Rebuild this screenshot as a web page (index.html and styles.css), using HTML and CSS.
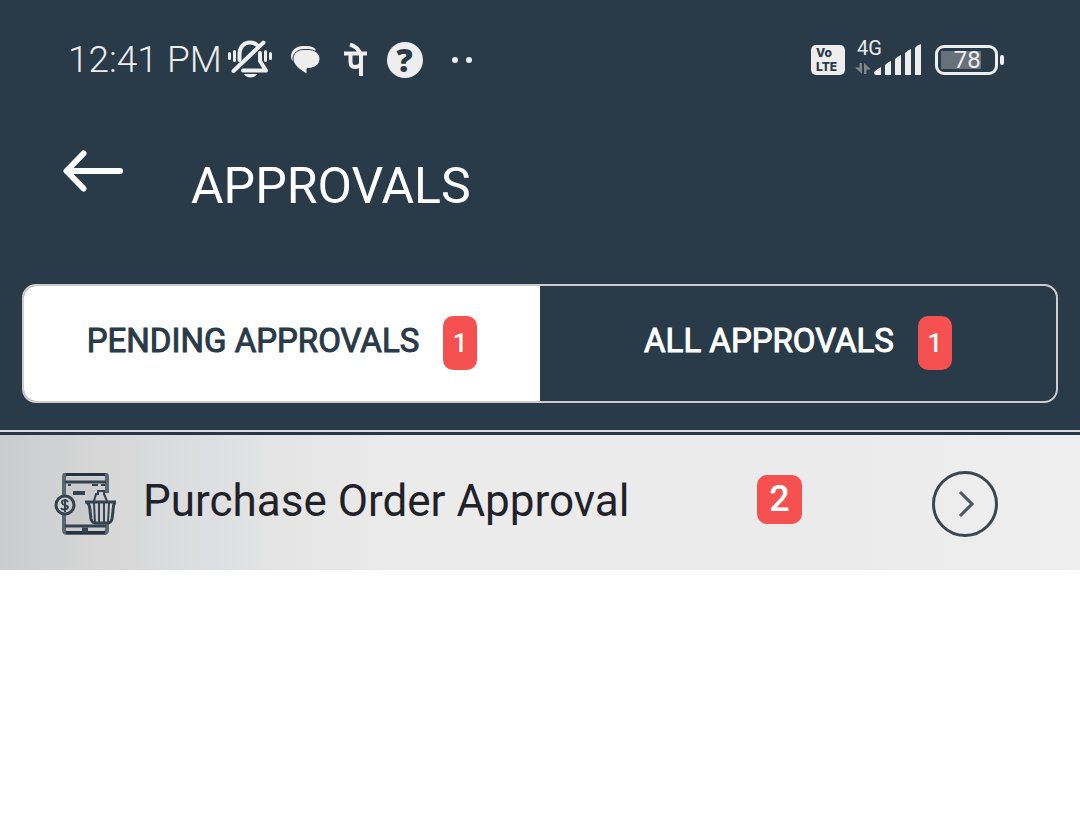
FILE: index.html
```html
<!DOCTYPE html>
<html lang="en">
<head>
<meta charset="utf-8">
<meta name="viewport" content="width=device-width, initial-scale=1">
<title>Approvals</title>
<link rel="stylesheet" href="styles.css">
</head>
<body>
<header class="top">
  <div class="status">
    <span class="clock">12:41 PM</span>
    <div class="notices">
      <svg class="bell" width="44" height="40" viewBox="0 0 44 40" fill="none" stroke="#eee" stroke-linecap="round">
        <path d="M1.500 13.500v5M6.500 11.500v9M37.500 11.500v9M42.500 13.500v5" stroke-width="3"/>
        <path d="M11.500 20v-6C11.500 7 16 2.500 22 2.500c3 0 5 .8 7 2.500M32 13v8l6 9.500H15" stroke-width="4" stroke-linejoin="round"/>
        <path d="M5.500 31L35.500 2.500" stroke-width="4"/>
        <path d="M16 34h13c-2 4.500-11 4.500-13 0z" fill="#eee" stroke="none"/>
      </svg>
      <svg class="chat" width="29" height="28" viewBox="0 0 29 28">
        <path d="M0 11C0 4 5 0 12 0h4c4 0 7 1 9 4L14 12 3 16Q0 14 0 11z" fill="#eee"/>
        <path d="M13 3.500h4c7 0 12 4 12 9.500s-5 9-11 9.500h-2V28C10 25 2 19 2 13 2 7 7 3.500 13 3.500z" fill="#eee" stroke="#293a48" stroke-width="1"/>
      </svg>
      <svg class="pay" width="24" height="34" viewBox="0 0 24 34" fill="none" stroke="#eee" stroke-width="4">
        <path d="M6 1.500q7 2 10.500 9M0 10.500h23M17 10v23M6.500 11v8q0 5 4.500 5 4 0 6-3"/>
      </svg>
      <span class="help">?</span>
      <span class="dots"><i></i><i></i></span>
    </div>
    <div class="system">
      <span class="volte"><span>Vo</span><span>LTE</span></span>
      <span class="signal">
        <span class="network">4G</span>
        <svg width="66" height="32" viewBox="0 0 66 32" fill="#eee">
          <path d="M4.500 19h2.500v11L0 23.500h4.500zM9 19l7 6.500h-4.500V30H9z" fill="#7d858c"/>
          <path d="M19 28q3-3 7-5v8h-5q-2 0-2-3z"/>
          <path d="M30 21q3-3 6-4v14h-6zM40 15q3-3 6-4v20h-6zM50 9q3-3 6-4v26h-6zM60 4q2-3 6-4v31h-6z"/>
        </svg>
      </span>
      <span class="battery"><span class="level">78</span></span>
    </div>
  </div>
  <div class="title-row">
    <button class="back" type="button" aria-label="Back">
      <svg width="61" height="42" viewBox="0 0 61 42" fill="none" stroke="#fff" stroke-width="6" stroke-linecap="round" stroke-linejoin="round">
        <path d="M20.500 3.500L3.500 21l17 17.500M5 21h52"/>
      </svg>
    </button>
    <h1>APPROVALS</h1>
  </div>
  <nav class="tabs">
    <button class="tab active" type="button"><span class="label">PENDING APPROVALS</span><span class="count">1</span></button>
    <button class="tab" type="button"><span class="label">ALL APPROVALS</span><span class="count">1</span></button>
  </nav>
</header>
<main>
  <a class="item" href="#">
    <svg width="62" height="62" viewBox="0 0 62 62" fill="none" stroke="#354350" stroke-width="2">
      <path d="M10 4h43v54H10z" fill="#354350" fill-opacity=".06" stroke="none"/>
      <path d="M10 22V4q0-3 3-3h37q3 0 3 3v16M10 42v15q0 3 3 3h37q3 0 3-3v-6" stroke="#5a6670" stroke-width="4"/>
      <path d="M12 1.500h39M12 59.500h39" stroke="#26323f" stroke-width="3"/>
      <path d="M11 9h41M11 53h41" stroke-width="3"/>
      <path d="M14 12h3M38 12h6M47 12h4" stroke-width="2"/>
      <path d="M19 20h12" stroke-width="4"/>
      <circle cx="11" cy="32" r="9" stroke-width="3"/>
      <path d="M14 29c-1-3-7-2-6 1s6 2 6 4-5 4-7 1M11 26v13"/>
      <path d="M31 29h31M33 29q3 3 3 9l1 8q1 4 4 4h13q3 0 4-4l1-8q0-6 2-9" stroke-width="3"/>
      <path d="M40 28l2-7h2v-3h6v3l3 7M40 30l1 20M45 30v20M50 30v20M55 30l-1 20"/>
      <path d="M28 57h6" stroke-width="5"/>
    </svg>
    <span class="name">Purchase Order Approval</span>
    <span class="count large">2</span>
    <svg class="go" width="66" height="66" viewBox="0 0 66 66" fill="none" stroke="#3a4753">
      <circle cx="33" cy="33" r="31.500" stroke-width="3"/>
      <path d="M28 21l12 12-12 12" stroke="#4b555f" stroke-width="3"/>
    </svg>
  </a>
</main>
</body>
</html>
```
FILE: styles.css
```css
* {
  box-sizing: border-box;
}

body {
  margin: 0;
  background: #fff;
  font-family: Roboto, "Liberation Sans", sans-serif;
}

button {
  margin: 0;
  padding: 0;
  border: 0;
  background: none;
  color: inherit;
  font: inherit;
}

svg {
  display: block;
  flex: none;
}

.top {
  padding: 36px 22px 27px;
  background: #293a48;
  color: #fff;
}

.status {
  display: flex;
  align-items: center;
  height: 48px;
  padding: 0 60px 0 46px;
  color: #eee;
}

.clock {
  font-size: 37px;
  font-weight: 300;
  line-height: 48px;
  white-space: nowrap;
}

.notices {
  display: flex;
  align-items: center;
  margin-left: 6px;
}

.chat {
  margin-left: 19px;
}

.pay {
  margin-left: 24px;
}

.help {
  width: 36px;
  margin-left: 19px;
  border-radius: 50%;
  background: #eee;
  color: #293a48;
  font: 900 32px/36px "Noto Sans", sans-serif;
  text-align: center;
}

.dots {
  display: flex;
  gap: 8px;
  margin-left: 29px;
}

.dots i {
  width: 6px;
  height: 6px;
  border-radius: 50%;
  background: #eee;
}

.system {
  display: flex;
  align-items: center;
  margin-left: auto;
}

.volte {
  display: flex;
  flex-direction: column;
  align-items: flex-start;
  width: 34px;
  padding: 1px 0 1px 5px;
  border-radius: 5px;
  background: #eee;
  color: #293a48;
  font: 800 12px/14px Inter, sans-serif;
}

.signal {
  position: relative;
  margin-left: 10px;
}

.network {
  position: absolute;
  top: -8px;
  left: 2px;
  font-size: 20px;
  line-height: 24px;
}

.battery {
  position: relative;
  width: 63px;
  margin-left: 14px;
  padding: 3px;
  border: 3px solid #eee;
  border-radius: 9px;
}

.battery::after {
  content: "";
  position: absolute;
  top: 7px;
  right: -9px;
  width: 4px;
  height: 10px;
  border-radius: 2px;
  background: #eee;
}

.level {
  display: block;
  width: 78%;
  background: #67717a;
  font-size: 24px;
  line-height: 18px;
  text-align: right;
}

.title-row {
  display: flex;
  align-items: flex-start;
  gap: 67px;
  padding: 66px 0 0 41px;
}

h1 {
  margin: 0;
  padding-top: 6px;
  font-size: 50px;
  font-weight: 400;
  line-height: 60px;
}

.tabs {
  display: grid;
  grid-template-columns: 1fr 1fr;
  margin-top: 68px;
  border: 2px solid #ccc;
  border-radius: 14px;
  overflow: hidden;
}

.tab {
  display: flex;
  align-items: flex-start;
  justify-content: center;
  gap: 24px;
  padding: 30px 0 31px;
  font-size: 33px;
  line-height: 50px;
}

.label {
  -webkit-text-stroke: 1px currentColor;
}

.tab.active {
  background: #fff;
  color: #293a48;
}

.count {
  width: 34px;
  border-radius: 10px;
  background: #f55151;
  color: #fff;
  font-size: 26px;
  font-weight: 500;
  line-height: 54px;
  text-align: center;
}

.count.large {
  width: 45px;
  margin-top: 4px;
  font-size: 36px;
  line-height: 49px;
}

main {
  border-top: 2px solid #dcdce2;
}

.item {
  display: grid;
  grid-template-columns: 62px 1fr 45px 196px;
  align-items: start;
  padding: 36px 82px 33px 54px;
  border-top: 3px solid #293648;
  background: linear-gradient(90deg, #cbccce 0, #d8d8d8 11%, #dddfe2 20%, #e4e4e4 25%, #ebebeb 37%, #ebebeb 80%, #efefef 100%);
  color: #212129;
  text-decoration: none;
}

.item > svg:first-child {
  margin-top: 2px;
}

.name {
  padding-left: 27px;
  font-size: 44px;
  line-height: 60px;
}

.go {
  justify-self: end;
}
```
